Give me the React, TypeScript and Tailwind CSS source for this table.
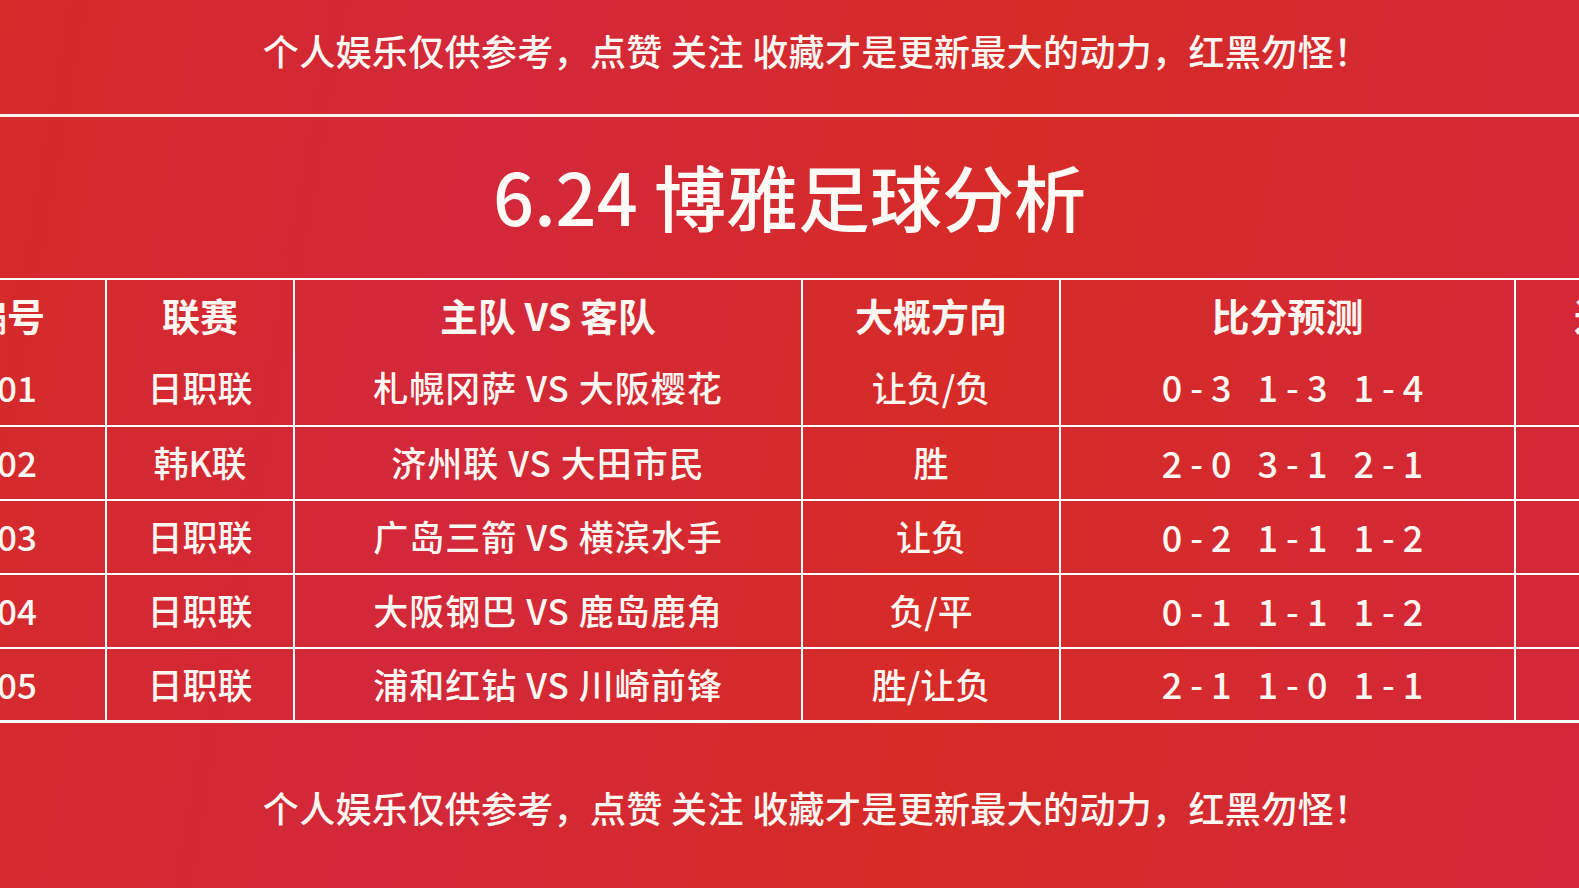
import React from "react";

const NOTE = "个人娱乐仅供参考，点赞 关注 收藏才是更新最大的动力，红黑勿怪！";

const widths = ["w-[198px]", "w-[188px]", "w-[508px]", "w-[258px]", "w-[455px]", "w-[230px]"];

const rows = [
  ["001", "日职联", "札幌冈萨 VS 大阪樱花", "让负/负", ["0-3", "1-3", "1-4"]],
  ["002", "韩K联", "济州联 VS 大田市民", "胜", ["2-0", "3-1", "2-1"]],
  ["003", "日职联", "广岛三箭 VS 横滨水手", "让负", ["0-2", "1-1", "1-2"]],
  ["004", "日职联", "大阪钢巴 VS 鹿岛鹿角", "负/平", ["0-1", "1-1", "1-2"]],
  ["005", "日职联", "浦和红钻 VS 川崎前锋", "胜/让负", ["2-1", "1-0", "1-1"]],
] as const;

function Cell({ i, children, className = "" }: { i: number; children?: React.ReactNode; className?: string }) {
  return (
    <div
      className={`${widths[i]} shrink-0 h-full flex items-center justify-center whitespace-nowrap ${
        i < 5 ? "border-r-2 border-white" : ""
      } ${className}`}
    >
      {children}
    </div>
  );
}

export default function App() {
  return (
    <div
      className="w-[1579px] h-[888px] overflow-hidden bg-[linear-gradient(100deg,#d52a2a_0%,#d3283a_30%,#d62b27_60%,#d3283a_100%)] text-white flex flex-col"
      style={{ fontFamily: '"Noto Sans CJK SC", "Noto Sans", sans-serif' }}
    >
      <div className="h-[114px] shrink-0 flex items-center justify-center pb-[14px] pl-[54px]">
        <span className="text-[36px] leading-none font-medium tracking-[0.35px] text-[#fdf7f2] whitespace-nowrap">
          {NOTE}
        </span>
      </div>
      <div className="h-[3px] shrink-0 bg-[#fbf3f0]" />
      <div className="h-[161px] shrink-0 flex items-center justify-center pb-[6px]">
        <span className="text-[72px] leading-none font-medium text-[#fefaf6]">6.24 博雅足球分析</span>
      </div>
      <div className="ml-[-91px] border-t-2 border-white flex flex-col shrink-0 text-[35px] leading-none text-[#fdf7f2]">
        <div className="flex h-[73px] font-bold text-[38px]">
          <Cell i={0} className="pb-[4px]">编号</Cell>
          <Cell i={1} className="pb-[4px]">联赛</Cell>
          <Cell i={2} className="pb-[4px]">主队 VS 客队</Cell>
          <Cell i={3} className="pb-[4px]">大概方向</Cell>
          <Cell i={4} className="pb-[4px]">比分预测</Cell>
          <Cell i={5} className="pb-[4px]">进球数</Cell>
        </div>
        {rows.map((r, idx) => {
          const pad = idx === 0 ? "pb-[6px]" : "pb-[3px]";
          return (
            <div
              key={r[0]}
              className={`flex h-[74px] border-white font-medium ${idx === 4 ? "border-b-[3px]" : "border-b-2"}`}
            >
              <Cell i={0} className={pad}>{r[0]}</Cell>
              <Cell i={1} className={pad}>{r[1]}</Cell>
              <Cell i={2} className={`tracking-[1px] ${pad}`}>{r[2]}</Cell>
              <Cell i={3} className={pad}>{r[3]}</Cell>
              <Cell i={4} className={pad}>
                <div className="flex gap-[18px] text-[36px] pl-[18px]">
                  {r[4].map((s, k) => (
                    <span key={k} className="tracking-[8px]">
                      {s}
                    </span>
                  ))}
                </div>
              </Cell>
              <Cell i={5} />
            </div>
          );
        })}
      </div>
      <div className="flex-1 flex items-center justify-center pt-[2px] pl-[54px]">
        <span className="text-[36px] leading-none font-medium tracking-[0.35px] text-[#fdf7f2] whitespace-nowrap">
          {NOTE}
        </span>
      </div>
    </div>
  );
}
